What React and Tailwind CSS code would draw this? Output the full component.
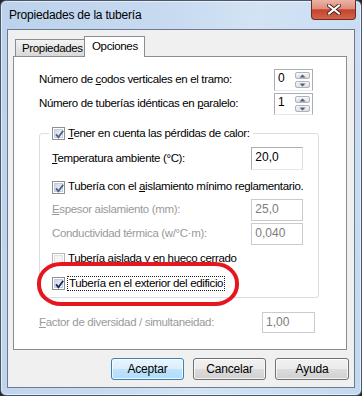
import React from 'react';

// Win7 style check box
const Check = ({ checked, tone = 'light', disabled }) => (
  <span
    className={`relative w-[13px] h-[13px] shrink-0 border ${disabled ? 'border-[#b8b8b8]' : 'border-[#8e8f8f]'} bg-white p-[1px]`}
  >
    <span
      className={`block w-full h-full border ${
        disabled
          ? 'border-[#e0e0e0] bg-[#f4f4f4]'
          : 'border-[#c5ccd6] bg-gradient-to-br from-[#cdd6e3] to-[#f7f9fc]'
      }`}
    />
    {checked && (
      <svg className="absolute left-0 top-0" width="13" height="13" viewBox="0 0 13 13">
        <path
          d="M3 6.3 L5.4 9.2 L10.2 2.8"
          fill="none"
          stroke={tone === 'dark' ? '#1b2c6a' : '#4c6394'}
          strokeWidth="1.9"
        />
      </svg>
    )}
  </span>
);

const TextBox = ({ value, disabled, w = 'w-[52px]', h = 'h-[23px]' }) => (
  <div
    className={`${w} ${h} shrink-0 bg-white border pl-[3px] pt-[2px] leading-[15px] text-[12px] tracking-[0px] ${
      disabled ? 'border-[#c9cbd0] text-[#7d7d7d]' : 'border-[#abadb3] border-b-[#e3e9ef] border-r-[#dbdfe6] text-black'
    }`}
  >
    {value}
  </div>
);

const SpinArrow = ({ up }) => (
  <div className="flex-1 rounded-[2px] border border-[#b0b4ba] bg-gradient-to-b from-[#f7f7f7] to-[#dcdde0] flex items-center justify-center">
    <svg width="7" height="4" viewBox="0 0 7 4">
      <path d={up ? 'M0.5 3.5 L3.5 0.5 L6.5 3.5 Z' : 'M0.5 0.5 L3.5 3.5 L6.5 0.5 Z'} fill="#4d6078" />
    </svg>
  </div>
);

const Spinner = ({ value }) => (
  <div className="w-[39px] h-[22px] shrink-0 bg-white border border-[#abadb3] border-b-[#e3e9ef] flex">
    <span className="flex-1 pl-[3px] pt-[1px] leading-[15px] text-[12px]">{value}</span>
    <div className="w-[17px] flex flex-col gap-[2px] py-[2px] pr-[2px]">
      <SpinArrow up />
      <SpinArrow />
    </div>
  </div>
);

const Button = ({ children, def }) => (
  <div
    className={`h-[22px] rounded-[3px] border flex items-center justify-center shadow-[inset_0_0_0_1px_rgba(255,255,255,0.75)] ${
      def
        ? 'border-[#3c7fb1] bg-[linear-gradient(to_bottom,#eaf5fd_0%,#d9eefc_50%,#bfe3fa_50%,#b3ddf8_100%)]'
        : 'border-[#707070] bg-[linear-gradient(to_bottom,#f2f2f2_0%,#ebebeb_50%,#dddddd_50%,#cfcfcf_100%)]'
    }`}
  >
    {children}
  </div>
);

export default function App() {
  return (
    <div className="w-[362px] h-[396px] bg-[#262626] font-['Liberation_Sans',Arial,sans-serif] text-[11.5px] tracking-[-0.35px] text-black">
      <div className="w-full h-full flex flex-col rounded-[6px] border border-[#4a566a] bg-[linear-gradient(100deg,#bcd2ec_0%,#c7daf0_40%,#d3e3f5_60%,#c3d8ef_100%)] shadow-[inset_0_0_0_1px_rgba(255,255,255,0.55)] px-[6px] pb-[7px]">
        {/* title bar */}
        <div className="h-[28px] flex items-start">
          <span className="ml-[2px] mt-[6px] leading-[16px] text-[12px] tracking-[-0.2px]">Propiedades de la tubería</span>
          <div className="ml-auto mr-[-1px] -mt-[1px] w-[45px] h-[20px] rounded-b-[4px] border border-t-0 border-[#6b2b22] bg-[linear-gradient(to_bottom,#ecb4a6_0%,#dd8e7c_45%,#c5432d_52%,#d4634b_100%)] flex items-center justify-center">
            <svg width="14" height="11" viewBox="0 0 14 11">
              <path d="M2 1.5 L12 9.5 M12 1.5 L2 9.5" stroke="#4a2520" strokeWidth="4" strokeLinecap="square" />
              <path d="M2 1.5 L12 9.5 M12 1.5 L2 9.5" stroke="#ffffff" strokeWidth="2" strokeLinecap="square" />
            </svg>
          </div>
        </div>

        {/* client area */}
        <div className="flex-1 border border-[#6b7a8f] bg-[#f0f0f0] flex flex-col pl-[5px] pt-[6px]">
          {/* tabs */}
          <div className="relative z-10 -mb-px flex items-end h-[21px] pl-[2px]">
            <div className="w-[69px] h-[17px] mb-[1px] border-l border-t border-[#898c95] bg-gradient-to-b from-[#f3f3f3] to-[#d8d8d8] pl-[6px] leading-[17px]">
              Propiedades
            </div>
            <div className="w-[61px] h-[21px] border-l border-t border-r border-[#898c95] bg-white pl-[7px] pt-[2px] leading-[15px]">
              Opciones
            </div>
          </div>

          {/* tab page */}
          <div className="relative w-[334px] h-[294px] border border-[#898c95] bg-white pl-[25px] pt-[12px]">
            <div className="w-[274px] h-[22px] flex items-center justify-between">
              <span>
                Número de <u>c</u>odos verticales en el tramo:
              </span>
              <Spinner value="0" />
            </div>
            <div className="mt-[2px] w-[274px] h-[22px] flex items-center justify-between">
              <span>
                Número de tuberías idénticas en <u>p</u>aralelo:
              </span>
              <Spinner value="1" />
            </div>

            <fieldset className="mt-[11px] w-[274px] border border-[#d5dfe5] rounded-[3px] pl-[12px] pr-[15px] pb-[7px]">
              <legend className="-ml-[3px] px-[3px] h-[14px]">
                <span className="flex items-center gap-[3px] h-[14px]">
                  <Check checked />
                  <span className="leading-[14px]">
                    <u>T</u>ener en cuenta las pérdidas de calor:
                  </span>
                </span>
              </legend>

              <div className="mt-[7px] h-[23px] flex items-center justify-between">
                <span>
                  <u>T</u>emperatura ambiente (°C):
                </span>
                <TextBox value="20,0" />
              </div>

              <div className="mt-[10px] h-[14px] flex items-center gap-[3px] whitespace-nowrap">
                <Check checked />
                <span>
                  Tubería con el <u>a</u>islamiento mínimo reglamentario.
                </span>
              </div>

              <div className="mt-[5px] h-[22px] flex items-center justify-between text-[#9a9a9a]">
                <span>
                  <u>E</u>spesor aislamiento (mm):
                </span>
                <TextBox value="25,0" disabled h="h-[22px]" />
              </div>

              <div className="mt-[2px] h-[22px] flex items-center justify-between text-[#9a9a9a]">
                <span>Conductividad térmica (w/°C·m):</span>
                <TextBox value="0,040" disabled h="h-[22px]" />
              </div>

              <div className="mt-[7px] h-[14px] flex items-center gap-[3px]">
                <Check disabled />
                <span>Tubería aislada y en hueco cerrado</span>
              </div>

              <div className="mt-[10px] h-[14px] flex items-center gap-[2px]">
                <Check checked tone="dark" />
                <span className="border border-dotted border-[#222] px-[1px] leading-[13px]">
                  Tubería en el exterior del edificio
                </span>
              </div>
            </fieldset>

            <div className="mt-[14px] w-[276px] h-[21px] flex items-center justify-between text-[#9a9a9a]">
              <span>
                <u>F</u>actor de diversidad / simultaneidad:
              </span>
              <TextBox value="1,00" disabled w="w-[53px]" h="h-[21px]" />
            </div>

            {/* red highlight drawn over the dialog */}
            <div className="pointer-events-none absolute left-[23px] top-[205px] w-[202px] h-[44px] rounded-[24px/21px] border-[4px] border-[#e5161e]" />
          </div>

          {/* dialog buttons */}
          <div className="mt-[8px] flex gap-[9px] pl-[98px] text-[12px] tracking-[-0.2px]">
            <div className="w-[73px]">
              <Button def>Aceptar</Button>
            </div>
            <div className="w-[73px]">
              <Button>Cancelar</Button>
            </div>
            <div className="w-[74px]">
              <Button>Ayuda</Button>
            </div>
          </div>
        </div>
      </div>
    </div>
  );
}
